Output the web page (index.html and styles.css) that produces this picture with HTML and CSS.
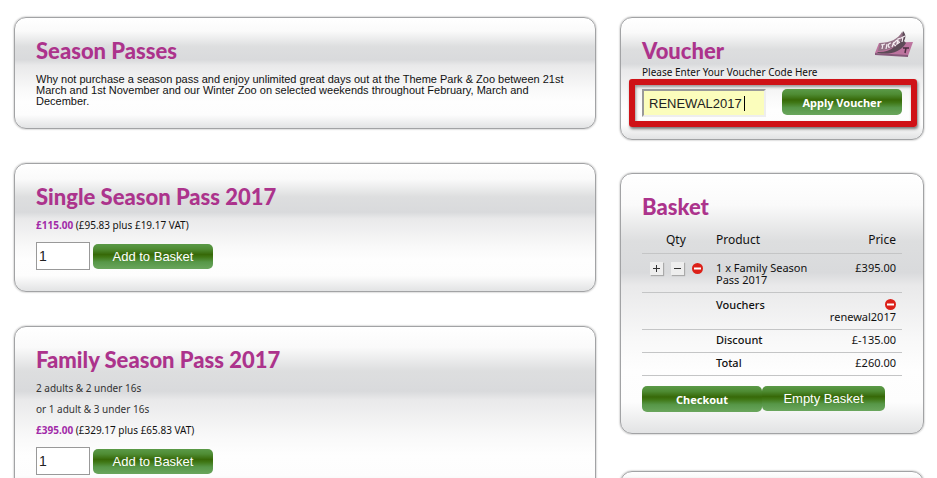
FILE: index.html
```html
<!DOCTYPE html>
<html lang="en">
<head>
    <meta charset="UTF-8">
    <meta name="viewport" content="width=device-width, initial-scale=1.0">
    <title>Season Passes</title>
    <link rel="stylesheet" href="styles.css">
</head>
<body>
    <div class="page">
        <!-- Products -->
        <main class="products">
            <section class="panel intro">
                <h2>Season Passes</h2>
                <p>Why not purchase a season pass and enjoy unlimited great days out at the Theme Park &amp; Zoo between 21st March and 1st November and our Winter Zoo on selected weekends throughout February, March and December.</p>
            </section>

            <section class="panel product">
                <h2>Single Season Pass 2017</h2>
                <p><span class="price">£115.00</span> (£95.83 plus £19.17 VAT)</p>
                <form class="add-form">
                    <input type="text" value="1" class="quantity" aria-label="Quantity, Single Season Pass">
                    <button type="button" class="button">Add to Basket</button>
                </form>
            </section>

            <section class="panel product">
                <h2>Family Season Pass 2017</h2>
                <p class="note">2 adults &amp; 2 under 16s</p>
                <p class="note">or 1 adult &amp; 3 under 16s</p>
                <p><span class="price">£395.00</span> (£329.17 plus £65.83 VAT)</p>
                <form class="add-form">
                    <input type="text" value="1" class="quantity" aria-label="Quantity, Family Season Pass">
                    <button type="button" class="button">Add to Basket</button>
                </form>
            </section>
        </main>

        <!-- Voucher and basket -->
        <aside class="sidebar">
            <section class="panel voucher">
                <h2>Voucher</h2>
                <svg class="ticket" width="40" height="28" viewBox="0 0 40 28" aria-hidden="true">
                    <path d="M5 13L39 12L34 26L1 23Z" fill="#bd749f"/>
                    <path d="M1 23L34 25L34 27L1 25Z" fill="#86587a"/>
                    <path d="M3 22C16 23 25 16 29 1C32 4 32 8 30 11L32 13C27 22 16 25 4 23Z" fill="#5d4a57"/>
                    <path d="M6 13C16 13 24 9 28 2C31 9 23 20 4 21Z" fill="#947387"/>
                    <path d="M7 15l4-1m-2 0l-1 5M13 14l-1 5M17 13c-3 0-4 5-1 4M20 12l-2 5M23 10l-4 4l3 2M27 8l-3 1l-1 5l3-2M25 11l-2 1M27 8l4-2M29 7l-1 5" fill="none" stroke="#f6eef3" stroke-width="1.2"/>
                    <path d="M29 18h6m-3 0l-1 5" fill="none" stroke="#4b2c40" stroke-width="1.5"/>
                </svg>
                <label for="voucher-code">Please Enter Your Voucher Code Here</label>
                <form class="voucher-form">
                    <div class="code-field">
                        <input type="text" id="voucher-code" value="RENEWAL2017">
                        <span class="caret"></span>
                    </div>
                    <button type="button" class="button strong">Apply Voucher</button>
                </form>
            </section>

            <section class="panel basket">
                <h2>Basket</h2>
                <table>
                    <thead>
                        <tr><th class="qty">Qty</th><th>Product</th><th class="amount">Price</th></tr>
                    </thead>
                    <tbody>
                        <tr class="item">
                            <td>
                                <div class="qty-actions">
                                    <button type="button" class="step" aria-label="Add one"><svg width="9" height="9" viewBox="0 0 9 9"><path d="M1 4.500H8M4.500 1V8" stroke="#333"/></svg></button>
                                    <button type="button" class="step" aria-label="Remove one"><svg width="9" height="9" viewBox="0 0 9 9"><path d="M1 4.500H8" stroke="#333"/></svg></button>
                                    <button type="button" class="remove" aria-label="Remove item"><svg width="11" height="11" viewBox="0 0 11 11"><circle cx="5.500" cy="5.500" r="5.500" fill="#dc2018"/><path d="M2 5.500H9" stroke="#fff" stroke-width="2"/></svg></button>
                                </div>
                            </td>
                            <td>1 x Family Season Pass 2017</td>
                            <td class="amount">£395.00</td>
                        </tr>
                        <tr class="code">
                            <td></td>
                            <th>Vouchers</th>
                            <td class="amount">
                                <button type="button" class="remove" aria-label="Remove voucher"><svg width="11" height="11" viewBox="0 0 11 11"><circle cx="5.500" cy="5.500" r="5.500" fill="#dc2018"/><path d="M2 5.500H9" stroke="#fff" stroke-width="2"/></svg></button>
                                renewal2017
                            </td>
                        </tr>
                        <tr><td></td><th>Discount</th><td class="amount">£-135.00</td></tr>
                        <tr><td></td><th>Total</th><td class="amount">£260.00</td></tr>
                    </tbody>
                </table>
                <div class="basket-actions">
                    <button type="button" class="button strong">Checkout</button>
                    <button type="button" class="button wide">Empty Basket</button>
                </div>
            </section>

            <section class="panel"></section>
        </aside>
    </div>
</body>
</html>
```
FILE: styles.css
```css
* {
    box-sizing: border-box;
}

body {
    margin: 0;
    background: #fff;
    color: #111;
    font-family: "Noto Sans", sans-serif;
    font-size: 10px;
    line-height: 12px;
}

.page {
    display: grid;
    grid-template-columns: minmax(0, 1fr) 304px;
    gap: 24px;
    padding: 17px 13px 0 14px;
}

.products,
.sidebar {
    display: flex;
    flex-direction: column;
    gap: 34px;
}

.sidebar {
    gap: 33px;
}

/* Panels */
.panel {
    position: relative;
    padding: 18px 21px 21px;
    border: 1px solid #a2a3a5;
    border-radius: 12px;
    background: linear-gradient(#fff 0%, #fafafa 12%, #dddedf 26%, #d9dadc 38%, #e9e9ea 43%, #f9f9f9 65%, #fefefe 76%, #fdfdfd 88%, #e2e3e4 100%);
    box-shadow: 0 0 2px #999;
}

h2 {
    margin: 0;
    color: #ac338c;
    font-family: Lato, sans-serif;
    font-size: 22px;
    font-weight: 900;
    line-height: 30px;
}

p {
    margin: 0;
}

.intro p {
    margin-top: 8px;
    font-family: "Liberation Sans", Arial, sans-serif;
    font-size: 11px;
    line-height: 11px;
}

.product p {
    margin-top: 7px;
}

.product p + p {
    margin-top: 9px;
}

.note {
    color: #333;
}

.price {
    color: #a12aa8;
    font-weight: bold;
}

/* Buttons and fields */
.button {
    width: 120px;
    height: 25px;
    padding: 0;
    border: none;
    border-radius: 5px;
    background: linear-gradient(#5b9a48 0%, #4f8c34 20%, #376908 42%, #3f7715 52%, #579748 72%, #6aa65d 100%);
    color: #fff;
    font-family: "Liberation Sans", Arial, sans-serif;
    font-size: 13px;
    cursor: pointer;
}

.strong {
    height: 26px;
    font-family: "Noto Sans", sans-serif;
    font-size: 11px;
    font-weight: bold;
}

.wide {
    width: 123px;
}

.add-form {
    display: flex;
    align-items: center;
    gap: 3px;
    margin-top: 11px;
}

.quantity {
    width: 54px;
    height: 28px;
    padding: 2px;
    border: 1px solid #999;
    background: #fff;
    color: #222;
    font-family: "Liberation Sans", Arial, sans-serif;
    font-size: 14px;
}

/* Voucher */
.voucher {
    padding-bottom: 12px;
}

.voucher label {
    display: block;
}

.ticket {
    position: absolute;
    top: 12px;
    right: 9px;
}

.voucher-form {
    display: flex;
    justify-content: space-between;
    margin: 1px -15px 0 -13px;
    padding: 4px 9px 4px 7px;
    border: 6px solid #cf1217;
    border-radius: 3px;
    box-shadow: 1px 2px 3px #777, inset 1px 2px 3px #999;
}

.code-field {
    position: relative;
}

.code-field input {
    width: 124px;
    height: 28px;
    padding: 0 5px;
    border: 2px solid;
    border-color: #999 #eee #eee #999;
    background: #fbfdbc;
    color: #222;
    font-family: "Liberation Sans", Arial, sans-serif;
    font-size: 13px;
}

.caret {
    position: absolute;
    top: 7px;
    left: 102px;
    width: 1px;
    height: 15px;
    background: #000;
}

/* Basket */
.basket {
    margin-bottom: 4px;
}

table {
    width: 100%;
    border-collapse: separate;
    border-spacing: 0;
    table-layout: fixed;
    font-size: 11px;
}

th,
td {
    padding: 4px 6px 6px 0;
    border-bottom: 1px solid #c4c5c6;
    font-weight: normal;
    text-align: left;
    vertical-align: top;
}

thead th {
    padding: 11px 6px 6px 0;
    font-size: 12px;
    line-height: 14px;
}

thead .qty {
    width: 74px;
    padding-left: 24px;
}

tbody th {
    font-weight: 500;
}

.amount {
    width: 80px;
    text-align: right;
}

.item td {
    padding-top: 8px;
}

.code th,
.code td {
    padding-top: 6px;
}

.qty-actions {
    display: flex;
    gap: 8px;
    padding-left: 8px;
}

.step {
    width: 13px;
    height: 13px;
    padding: 2px;
    border: none;
    background: #eee;
    box-shadow: 1px 1px 1px #aaa;
}

.step svg,
.remove svg {
    display: block;
}

.remove {
    padding: 0;
    border: none;
    background: none;
}

.amount .remove {
    display: block;
    margin: 0 0 1px auto;
}

.basket-actions {
    display: flex;
    margin-top: 10px;
}
```
